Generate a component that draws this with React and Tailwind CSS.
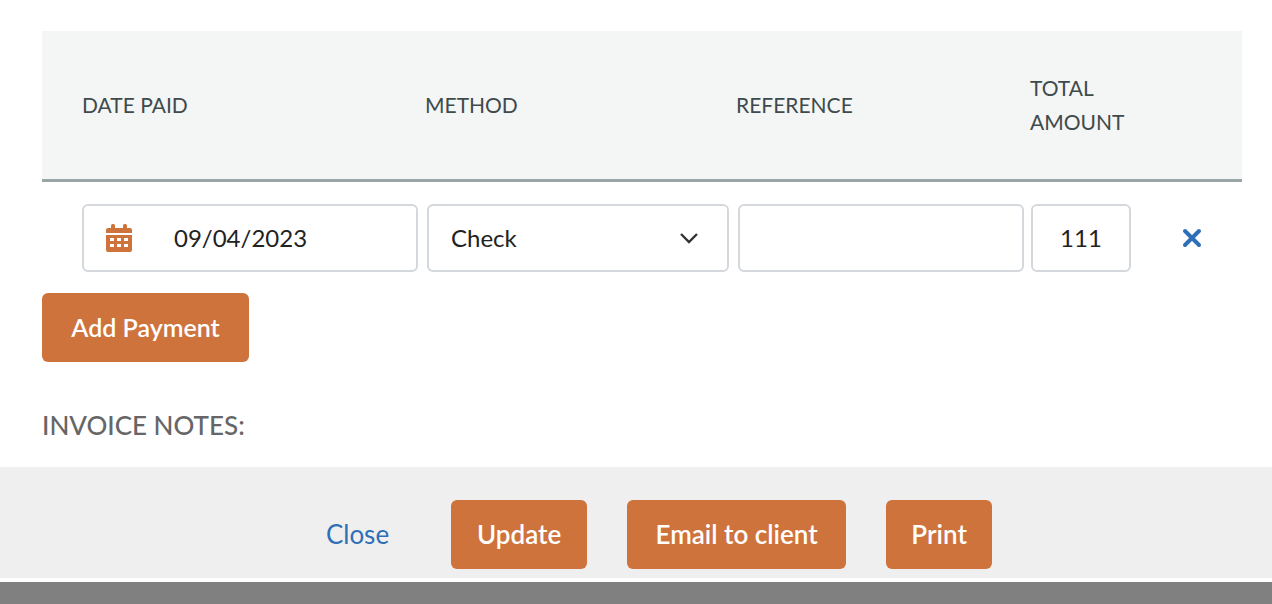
export default function App() {
  const f = { fontFamily: "Lato, 'Open Sans', sans-serif" };
  return (
    <div style={f} className="w-[1272px] h-[604px] bg-white flex flex-col overflow-hidden">
      <div className="pl-[42px] pr-[30px] pt-[31px]">
        <div className="bg-[#f4f6f5] border-b-[3px] border-[#9aa6a6] flex items-center text-[21px] text-[#3f4a4c] h-[151px]">
          <div className="w-[383px] pl-[40px]">DATE PAID</div>
          <div className="w-[311px]">METHOD</div>
          <div className="w-[294px]">REFERENCE</div>
          <div className="leading-[34px]">TOTAL<br />AMOUNT</div>
        </div>
        <div className="flex items-center gap-[9px] pl-[40px] mt-[22px] text-[24px] text-[#222]">
          <div className="w-[336px] h-[68px] border-2 border-[#d4d8dc] rounded-[6px] flex items-center">
            <svg width="26" height="28" viewBox="0 0 26 28" className="ml-[22px]">
              <rect x="0" y="4" width="26" height="24" rx="2" fill="#cf733c" />
              <rect x="5" y="0" width="4" height="7" rx="1.5" fill="#cf733c" />
              <rect x="17" y="0" width="4" height="7" rx="1.5" fill="#cf733c" />
              <rect x="0" y="9" width="26" height="2" fill="white" />
              {[14, 20].map(y => [4, 11, 18].map(x => <rect key={x + "-" + y} x={x} y={y} width="4" height="3" fill="white" />))}
            </svg>
            <span className="ml-[42px]">09/04/2023</span>
          </div>
          <div className="w-[302px] h-[68px] border-2 border-[#d4d8dc] rounded-[6px] flex items-center justify-between pl-[22px] pr-[28px]">
            <span>Check</span>
            <svg width="20" height="12" viewBox="0 0 20 12"><path d="M2 2l8 8 8-8" fill="none" stroke="#333" strokeWidth="2.4" /></svg>
          </div>
          <div className="w-[286px] h-[68px] border-2 border-[#d4d8dc] rounded-[6px]" />
          <div className="w-[100px] h-[68px] border-2 border-[#d4d8dc] rounded-[6px] flex items-center justify-center ml-[-2px]">111</div>
          <svg width="20" height="20" viewBox="0 0 20 20" className="ml-[42px]"><path d="M3 3l14 14M17 3L3 17" stroke="#2f6fb7" strokeWidth="4" strokeLinecap="round" /></svg>
        </div>
        <button className="mt-[21px] w-[207px] h-[69px] bg-[#cf733c] rounded-[6px] text-white text-[25px] font-semibold">Add Payment</button>
        <div className="mt-[44px] text-[26px] text-[#666] font-medium">INVOICE NOTES:</div>
      </div>
      <div className="mt-[22px] h-[111px] bg-[#efefef] flex items-center justify-center text-[26px] pt-[23px] pl-[46px]">
        <span className="text-[#2f6fb7] mr-[62px]">Close</span>
        <button className="w-[136px] h-[69px] bg-[#cf733c] rounded-[6px] text-white font-semibold mr-[40px]">Update</button>
        <button className="w-[219px] h-[69px] bg-[#cf733c] rounded-[6px] text-white font-semibold mr-[40px]">Email to client</button>
        <button className="w-[106px] h-[69px] bg-[#cf733c] rounded-[6px] text-white font-semibold">Print</button>
      </div>
      <div className="h-[4px] bg-white" />
      <div className="flex-1 bg-[#808080]" />
    </div>
  );
}
